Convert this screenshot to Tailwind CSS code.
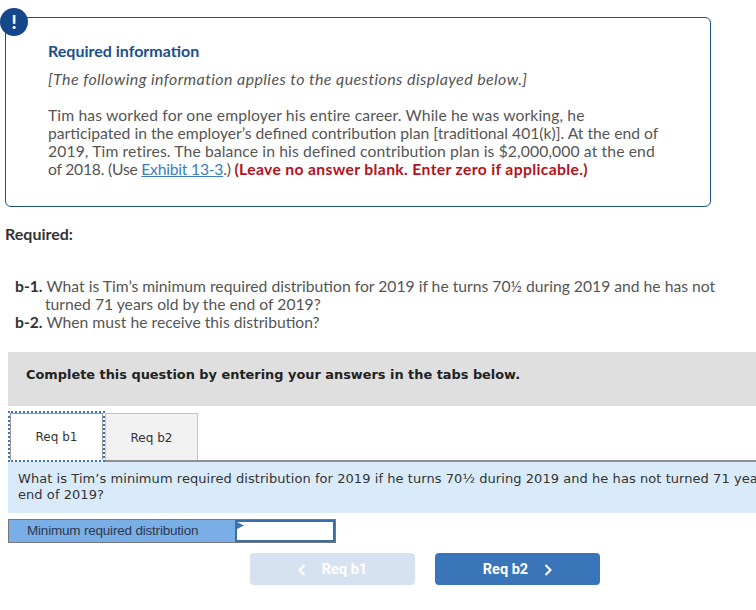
<!DOCTYPE html>
<html lang="en">
<head>
  <meta charset="UTF-8">
  <title>Required information</title>
  <script src="https://cdn.jsdelivr.net/npm/@tailwindcss/browser@4"></script>
</head>
<body class="bg-white overflow-hidden font-['Lato',sans-serif] text-[#555]">

  <!-- Info box -->
  <div class="relative ml-[5px] mt-[17px] w-[706px] h-[190px] border border-[#1b4f8a] rounded-md pl-[42px] pt-[24px]">
    <div class="absolute left-[-6px] top-[-10px] w-[28px] h-[28px] rounded-full bg-[#15488a] text-white flex items-center justify-center font-black text-[18px]">!</div>
    <h2 class="text-[16px] leading-[18px] font-bold text-[#1b4f8a]">Required information</h2>
    <p class="mt-[10px] text-[16px] leading-[18px] italic tracking-[0.4px]">[The following information applies to the questions displayed below.]</p>
    <p class="mt-[18px] text-[15.7px] leading-[18px] w-[650px]"><span class="tracking-[0.13px]">Tim has worked for one employer his entire career. While he was working, he</span><br>participated in the employer’s defined contribution plan [traditional 401(k)]. At the end of<br><span class="tracking-[0.115px]">2019, Tim retires. The balance in his defined contribution plan is $2,000,000 at the end</span><br><span class="tracking-[-0.23px]">of 2018. (Use <a class="text-[#3b7cc4] underline">Exhibit 13-3</a>.) </span><span class="font-bold text-[#b5121b] tracking-[0.35px]">(Leave no answer blank. Enter zero if applicable.)</span></p>
  </div>

  <!-- Required -->
  <p class="ml-[5px] mt-[18px] text-[16px] leading-[18px] font-bold text-[#333]">Required:</p>
  <div class="mt-[34px] ml-[15px] text-[15.7px] leading-[18px]">
    <p class="pl-[30px] -indent-[30px]"><b class="text-[#333]">b-1.</b> What is Tim’s minimum required distribution for 2019 if he turns 70½ during 2019 and he has not<br>turned 71 years old by the end of 2019?</p>
    <p><b class="text-[#333]">b-2.</b> When must he receive this distribution?</p>
  </div>

  <!-- Instruction bar -->
  <div class="mt-[21px] ml-[8px] h-[54px] bg-[#dfdfdf] flex items-center pl-[18px] pb-[8px] font-['DejaVu_Sans',sans-serif] font-bold text-[12.9px] text-[#222]">Complete this question by entering your answers in the tabs below.</div>

  <!-- Tabs -->
  <div class="mt-[6px] ml-[8px] flex items-end h-[48px] font-['DejaVu_Sans',sans-serif] text-[12px] text-[#333]">
    <div class="relative z-10 w-[97px] h-[51px] mb-[-2px] border-2 border-dotted border-[#3a76bb] bg-white">
      <div class="h-full border border-b-0 border-[#999] flex items-center justify-center">Req b1</div>
    </div>
    <div class="w-[93px] h-[47px] border border-b-0 border-[#c4c4c4] bg-[#f2f2f2] flex items-center justify-center pt-[2px]">Req b2</div>
  </div>
  <div class="ml-[8px] h-[53px] border-t-2 border-[#8f8f8f] bg-[#d9ebfa] pl-[10px] pt-[9px] font-['DejaVu_Sans',sans-serif] text-[13px] leading-[16px] tracking-[0.06px] text-[#333] whitespace-nowrap overflow-hidden">What is Tim’s minimum required distribution for 2019 if he turns 70½ during 2019 and he has not turned 71 years old by the<br>end of 2019?</div>

  <!-- Answer row -->
  <div class="mt-[6px] ml-[8px] w-[328px] h-[24px] flex border border-[#777] font-['Liberation_Sans',sans-serif] text-[13.5px]">
    <div class="w-[226px] bg-[#7aaee6] pl-[18px] flex items-center text-[#2c3a4d] tracking-[-0.2px]">Minimum required distribution</div>
    <div class="relative flex-1 bg-white border-2 border-[#3a6ea8]">
      <svg class="absolute left-0 top-0" width="7" height="7" viewBox="0 0 7 7"><path d="M0 0 L7 3.5 L0 7 Z" fill="#3a76bb"/></svg>
    </div>
  </div>

  <!-- Nav buttons -->
  <div class="mt-[10px] ml-[250px] flex gap-[20px] font-['Roboto',sans-serif] font-bold text-[14.5px] text-white">
    <div class="w-[165px] h-[32px] pt-[2px] rounded-sm bg-[#d6e2f0] flex items-center justify-center gap-[16px]">
      <svg width="8" height="12" viewBox="0 0 8 12" fill="none" stroke="white" stroke-width="2"><path d="M6.5 1 L1.5 6 L6.5 11"/></svg>
      <span>Req b1</span>
    </div>
    <div class="w-[165px] h-[32px] pt-[2px] rounded-sm bg-[#3a75ba] flex items-center justify-center gap-[16px]">
      <span>Req b2</span>
      <svg width="8" height="12" viewBox="0 0 8 12" fill="none" stroke="white" stroke-width="2"><path d="M1.5 1 L6.5 6 L1.5 11"/></svg>
    </div>
  </div>

</body>
</html>
